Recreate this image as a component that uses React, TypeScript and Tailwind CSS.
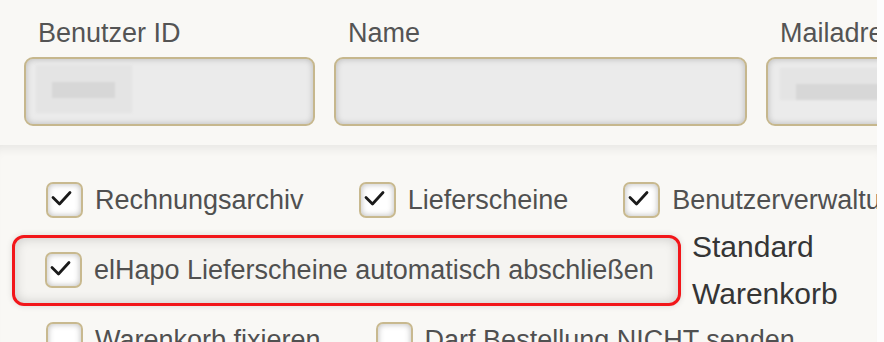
import React from 'react';

const font = { fontFamily: '"Liberation Sans", Arial, sans-serif' };

const Check = ({ checked }: { checked: boolean }) => (
  <span className="relative w-[37px] h-[36px] shrink-0 rounded-[7px] border-[2.5px] border-[#c8b98f] bg-white shadow-[inset_0_0_6px_rgba(0,0,0,0.28)]">
    {checked && (
      <svg className="absolute left-0 top-0" width="32" height="31" viewBox="0 0 32 31">
        <polyline points="5,13.5 11.5,20 22,8.5" fill="none" stroke="#1a1a1a" strokeWidth="2.8" strokeLinecap="round" strokeLinejoin="round" />
      </svg>
    )}
  </span>
);

const Item = ({ label, checked = true, last = false }: { label: string; checked?: boolean; last?: boolean }) => (
  <label className={`flex items-center gap-[12px] shrink-0 ${last ? '' : 'mr-[55px]'}`}>
    <Check checked={checked} />
    <span className="text-[27px] leading-[31px] text-[#505050] whitespace-nowrap">{label}</span>
  </label>
);

const Field = ({ label, width, blur }: { label: string; width: string; blur?: 'left' | 'right' }) => (
  <div className={`flex flex-col shrink-0 ${width}`}>
    <span className="pl-[14px] text-[27px] leading-[31px] text-[#545454] whitespace-nowrap">{label}</span>
    <div className="relative mt-[8px] h-[69px] rounded-[9px] border-2 border-[#c6b78d] bg-[#ebebeb] shadow-[inset_0_0_6px_rgba(0,0,0,0.22)] overflow-hidden">
      {blur === 'left' && (
        <div className="absolute left-[10px] top-[6px] w-[96px] h-[48px] bg-[#e4e4e4] blur-[1px]">
          <div className="absolute left-[16px] top-[17px] w-[63px] h-[16px] bg-[#d7d7d7]" />
        </div>
      )}
      {blur === 'right' && (
        <div className="absolute left-[12px] top-[9px] w-[120px] h-[32px] bg-[#e4e4e4] blur-[1px]">
          <div className="absolute left-[16px] top-[16px] w-[104px] h-[16px] bg-[#d7d7d7]" />
        </div>
      )}
    </div>
  </div>
);

export default function App() {
  return (
    <div className="w-[884px] h-[342px] overflow-hidden bg-[#fdfdfd] flex" style={font}>
      <div className="w-[877px] shrink-0 bg-[#f9f8f5] overflow-hidden flex flex-col">
        {/* Benutzerdaten */}
        <div className="h-[145px] shrink-0 flex gap-[19px] pl-[24px] pt-[18px]">
          <Field label="Benutzer ID" width="w-[291px]" blur="left" />
          <Field label="Name" width="w-[413px]" />
          <Field label="Mailadresse" width="w-[300px]" blur="right" />
        </div>

        {/* Rechte */}
        <div className="flex-1 flex flex-col bg-[#f9f8f5] shadow-[inset_0_10px_10px_-6px_rgba(0,0,0,0.07)]">
          <div className="flex items-center pl-[46px] mt-[37px]">
            <Item label="Rechnungsarchiv" />
            <Item label="Lieferscheine" />
            <Item label="Benutzerverwaltung" last />
          </div>

          <div className="flex items-center pl-[12px] mt-[5px] h-[94px]">
            <div className="w-[669px] h-[71px] shrink-0 flex items-center pl-[30px] rounded-[12px] border-[3px] border-[#f2161a] bg-[#f5f4f1] shadow-[inset_0_0_12px_rgba(0,0,0,0.18),0_0_6px_rgba(0,0,0,0.12)]">
              <Item label="elHapo Lieferscheine automatisch abschließen" last />
            </div>
            <div className="ml-[11px] text-[30px] leading-[47px] text-[#353535]">
              <div>Standard</div>
              <div>Warenkorb</div>
            </div>
          </div>

          <div className="flex items-center pl-[46px] mt-[5px]">
            <Item label="Warenkorb fixieren" checked={false} />
            <Item label="Darf Bestellung NICHT senden" checked={false} last />
          </div>
        </div>
      </div>
    </div>
  );
}
